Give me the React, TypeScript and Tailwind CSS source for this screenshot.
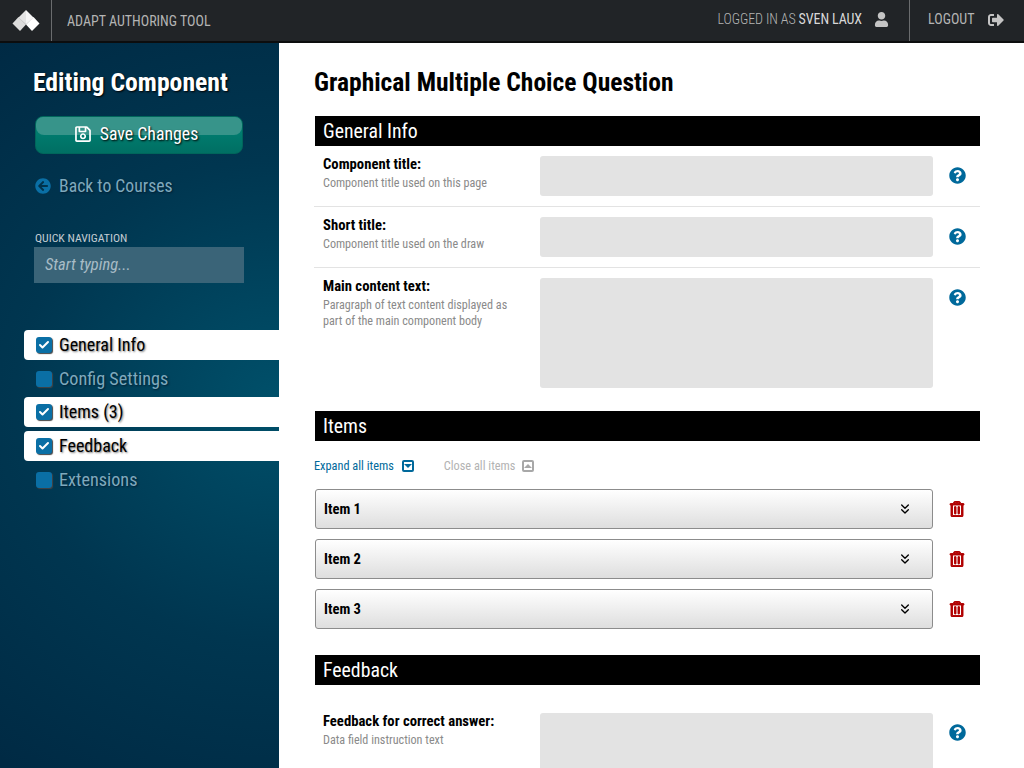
import { FaArrowCircleLeft, FaQuestionCircle, FaRegSave, FaRegTrashAlt, FaSignOutAlt, FaUser } from "react-icons/fa";
import { Check, ChevronsDown } from "lucide-react";

const font = "font-['Roboto','Liberation_Sans',sans-serif] [font-stretch:75%]";

const sections = [
  { label: "General Info", on: true },
  { label: "Config Settings", on: false },
  { label: "Items (3)", on: true },
  { label: "Feedback", on: true },
  { label: "Extensions", on: false },
];

function Field({ title, hint, h, border = true }: { title: string; hint: string; h: string; border?: boolean }) {
  return (
    <div className={border ? "flex border-b border-[#e3e3e3] py-[10px] pl-[9px]" : "flex pt-[10px] pl-[9px]"}>
      <div className="w-[217px] shrink-0">
        <div className="text-[14.7px] leading-4 font-bold text-black">{title}</div>
        <div className="mt-[3px] w-[195px] text-[12.15px] leading-[16px] text-[#8a8a8a]">{hint}</div>
      </div>
      <div className={`${h} w-[393px] rounded-[3px] bg-[#e3e3e3]`} />
      <FaQuestionCircle size={17} className="mt-[11px] ml-4 shrink-0 text-[#00699b]" />
    </div>
  );
}

function Band({ children }: { children: string }) {
  return <h2 className="ml-px h-[30px] bg-black pl-2 text-[19.8px] leading-[32px] text-white">{children}</h2>;
}

function ItemRow({ label }: { label: string }) {
  return (
    <div className="ml-px flex items-center">
      <div className="flex h-10 w-[618px] items-center justify-between rounded-[3px] border border-[#8c8c8c] bg-gradient-to-b from-white to-[#dedede] pr-[19px] pl-2">
        <span className="pt-[2px] text-[14.6px] font-bold text-black">{label}</span>
        <ChevronsDown size={16} strokeWidth={2} className="-mt-px text-black" />
      </div>
      <FaRegTrashAlt size={16} stroke="currentColor" strokeWidth={30} className="-mt-px ml-4 text-[#b00000]" />
    </div>
  );
}

export default function App() {
  return (
    <div className={`${font} flex h-[768px] w-[1024px] flex-col overflow-hidden bg-white`}>
      <header className="flex h-[43px] shrink-0 items-stretch border-b-2 border-[#0c0d0e] bg-[#212427] text-[14px] text-[#b4b4b4]">
        <div className="flex w-[52px] items-center justify-center border-r border-[#6a6c6e]">
          <svg width="28" height="22" viewBox="0 0 28 22">
            <path d="M14 0 L6.5 7.5 L14 14.5 Z" fill="#e4e4e4" />
            <path d="M14 0 L21.5 7.5 L14 14.5 Z" fill="#f6f6f6" />
            <path d="M6.5 7 L0.5 13.5 L8 21 L14 14.5 Z" fill="#dcdcdc" />
            <path d="M21.5 7 L27.5 13.5 L20 21 L14 14.5 Z" fill="#ffffff" />
          </svg>
        </div>
        <div className="flex flex-1 items-center pt-[2px] pl-[15px]">ADAPT AUTHORING TOOL</div>
        <div className="flex items-center gap-[12px] border-r border-[#6a6c6e] pr-5 pb-[2px]">
          <span className="font-light tracking-[-0.1px]">
            LOGGED IN AS <span className="font-normal text-[#d8d8d8]">SVEN LAUX</span>
          </span>
          <FaUser size={15} className="text-[#c4c4c4]" />
        </div>
        <div className="flex w-[114px] items-center gap-[14px] pb-[2px] pl-[18px]">
          <span className="font-normal">LOGOUT</span>
          <FaSignOutAlt size={16} className="text-[#c4c4c4]" />
        </div>
      </header>

      <div className="flex flex-1">
        <aside className="w-[279px] shrink-0 bg-[radial-gradient(ellipse_480px_440px_at_100%_46%,#00506a_0%,#003650_55%,#002a44_100%)] pt-[23px]">
          <h1 className="ml-[33px] text-[25.7px] leading-8 font-bold text-white [text-shadow:1px_1px_2px_#000]">
            Editing Component
          </h1>
          <button className="relative mt-[18px] ml-[35px] flex h-[38px] w-[208px] items-center justify-center gap-2 overflow-hidden rounded-lg border border-[#00665b] bg-gradient-to-b from-[#008577] to-[#006f63] pr-[6px] pb-[2px] text-[17.8px] text-white [text-shadow:1px_1px_2px_#000]">
            <span className="absolute inset-x-0 top-0 h-[18px] rounded-b-lg bg-[#37948a]" />
            <FaRegSave size={18} className="relative" />
            <span className="relative">Save Changes</span>
          </button>
          <div className="mt-[20px] ml-[35px] flex items-center gap-2 text-[17.7px] leading-6 text-[#7fa9bd] [text-shadow:1px_1px_2px_#001f33]">
            <FaArrowCircleLeft size={16} className="text-[#0a6fa5]" />
            Back to Courses
          </div>
          <div className="mt-[32px] ml-[35px] text-[11.8px] leading-4 text-[#c3ccd2]">QUICK NAVIGATION</div>
          <div className="mt-px ml-[34px] flex h-9 w-[210px] items-center bg-[#3a6478] pl-[11px] text-[16.5px] text-[#a8bcc6] italic">
            Start typing...
          </div>
          <nav className="mt-[47px] ml-6 flex flex-col gap-[4px]">
            {sections.map((s) => (
              <div
                key={s.label}
                className={
                  s.on
                    ? "flex h-[30px] items-center gap-[7px] rounded-l-[4px] bg-white pb-[2px] pl-3 text-[18px] text-black [text-shadow:1px_1px_2px_#777]"
                    : "flex h-[29px] items-center gap-[7px] pl-3 text-[18.2px] text-[#7fa9bd] [text-shadow:1px_1px_2px_#001f33]"
                }
              >
                <span className="mt-px flex h-4 w-4 items-center justify-center rounded-[3px] bg-[#0a6fa5] shadow-[1px_1px_1px_#444]">
                  {s.on ? <Check size={12} strokeWidth={4} className="text-white" /> : null}
                </span>
                {s.label}
              </div>
            ))}
          </nav>
        </aside>

        <main className="flex-1 pr-[44px] pl-[35px]">
          <h1 className="mt-[23px] text-[25.5px] leading-8 font-bold text-black">Graphical Multiple Choice Question</h1>
          <div className="mt-[18px]">
            <Band>General Info</Band>
            <Field title="Component title:" hint="Component title used on this page" h="h-10" />
            <Field title="Short title:" hint="Component title used on the draw" h="h-10" />
            <Field title="Main content text:" hint="Paragraph of text content displayed as part of the main component body" h="h-[110px]" border={false} />
          </div>
          <div className="mt-[23px]">
            <Band>Items</Band>
            <div className="mt-[17px] flex items-center text-[12.3px] leading-4">
              <span className="text-[#00699b]">Expand all items</span>
              <span className="ml-2 flex h-3 w-3 items-center justify-center rounded-[2px] border-2 border-[#00699b]">
                <span className="border-x-[4px] border-t-[4px] border-x-transparent border-t-[#00699b]" />
              </span>
              <span className="ml-[30px] text-[#b3b3b3]">Close all items</span>
              <span className="ml-[7px] flex h-3 w-3 items-center justify-center rounded-[2px] border-2 border-[#a8a8a8]">
                <span className="border-x-[4px] border-b-[4px] border-x-transparent border-b-[#a8a8a8]" />
              </span>
            </div>
            <div className="mt-[15px] flex flex-col gap-[10px]">
              <ItemRow label="Item 1" />
              <ItemRow label="Item 2" />
              <ItemRow label="Item 3" />
            </div>
          </div>
          <div className="mt-[26px]">
            <Band>Feedback</Band>
            <div className="mt-[18px]">
              <Field title="Feedback for correct answer:" hint="Data field instruction text" h="h-[110px]" border={false} />
            </div>
          </div>
        </main>
      </div>
    </div>
  );
}
